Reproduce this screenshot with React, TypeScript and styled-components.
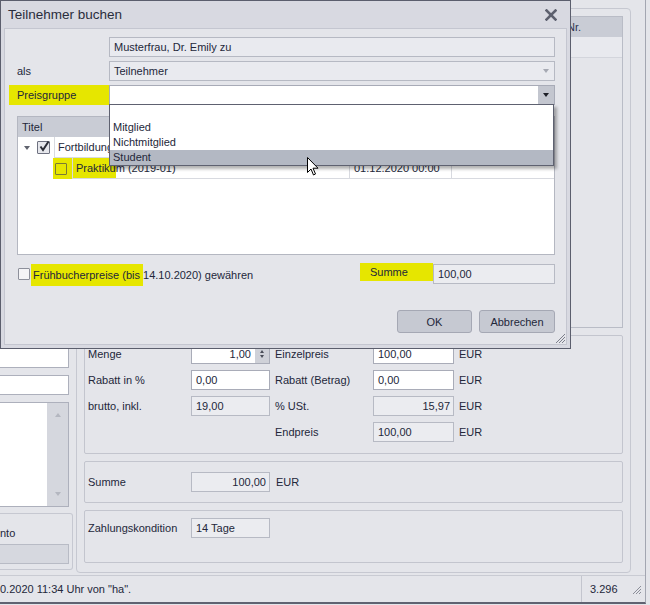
import React from 'react'
import styled, { createGlobalStyle } from 'styled-components'

const HIGHLIGHT = '#e6e600'
const TEXT = '#23273a'

const GlobalStyle = createGlobalStyle`
  html, body {
    margin: 0;
    padding: 0;
  }
  body {
    font-family: 'Liberation Sans', Arial, sans-serif;
    font-size: 11px;
    color: ${TEXT};
    background: #e4e5ea;
  }
  * {
    box-sizing: border-box;
  }
`

const Screen = styled.div`
  position: relative;
  width: 650px;
  height: 605px;
  overflow: hidden;
  background: #e4e5ea;
`

/* ---------- background application window ---------- */

const AppWindow = styled.div`
  display: flex;
  flex-direction: column;
  width: 646px;
  height: 604px;
  border-right: 1px solid #a3a6b1;
  border-bottom: 2px solid #5f6271;
`

const MainArea = styled.div`
  display: flex;
  height: 575px;
`

const LeftCol = styled.div`
  width: 73px;
  display: flex;
  flex-direction: column;
  justify-content: flex-end;
  padding-bottom: 5px;
`

const SideInput = styled.div`
  width: 69px;
  height: 20px;
  background: #fff;
  border: 1px solid #adb0bc;
  border-left: none;
  margin-bottom: 7px;
`

const Memo = styled.div`
  width: 69px;
  height: 105px;
  background: #fff;
  border: 1px solid #adb0bc;
  border-left: none;
  margin-bottom: 6px;
  display: flex;
  justify-content: flex-end;
`

const ScrollBar = styled.div`
  width: 21px;
  background: #d5d7de;
  display: flex;
  flex-direction: column;
  justify-content: space-between;
  align-items: center;
  padding: 10px 0 10px;
`

const Tri = styled.span<{ $dir: 'up' | 'down'; $color: string; $w?: number; $h?: number }>`
  width: 0;
  height: 0;
  border-left: ${p => (p.$w ?? 7) / 2}px solid transparent;
  border-right: ${p => (p.$w ?? 7) / 2}px solid transparent;
  ${p => (p.$dir === 'up' ? 'border-bottom' : 'border-top')}: ${p => p.$h ?? 4}px solid ${p => p.$color};
`

const SideGroup = styled.div`
  width: 73px;
  height: 57px;
  border: 1px solid #c6c8d1;
  border-left: none;
  border-radius: 0 3px 3px 0;
  padding-top: 12px;
  display: flex;
  flex-direction: column;
`

const SideLabel = styled.div`
  line-height: 14px;
  height: 14px;
`

const SideField = styled.div`
  margin-top: 4px;
  width: 69px;
  height: 20px;
  background: #d6d8df;
  border: 1px solid #b8bbc5;
  border-left: none;
`

const MainGroup = styled.div`
  margin: 8px 0 2px 3px;
  width: 555px;
  border: 1px solid #c6c8d1;
  border-radius: 4px;
  padding: 7px 7px 0 7px;
  display: flex;
  flex-direction: column;
  gap: 7px;
`

const RightStrip = styled.div`
  flex: 1;
`

const GridBox = styled.div`
  height: 312px;
  border: 1px solid #b9bcc6;
  display: flex;
  flex-direction: column;
`

const GridHeader = styled.div`
  height: 20px;
  background: #c9ccd5;
  display: flex;
  justify-content: flex-end;
`

const GridHeadCell = styled.div<{ $w: number }>`
  width: ${p => p.$w}px;
  border-left: 1px solid #b0b3be;
  padding-left: 4px;
  display: flex;
  align-items: center;
  color: #2d3350;
`

const GridRow = styled.div`
  height: 21px;
  background: #e8e9ee;
  border-bottom: 1px solid #d3d5dc;
`

const Section = styled.div<{ $h: number; $pt: number }>`
  height: ${p => p.$h}px;
  border: 1px solid #c3c5ce;
  border-radius: 2px;
  padding: ${p => p.$pt}px 0 0 3px;
`

const FieldGrid = styled.div`
  display: grid;
  grid-template-columns: 103px 79px 103px 81px auto;
  grid-auto-rows: 20px;
  row-gap: 6px;
  align-items: center;
`

const Label = styled.span<{ $pl?: number }>`
  padding-left: ${p => p.$pl ?? 0}px;
  white-space: nowrap;
`

const Box = styled.div<{ $tone?: 'white' | 'grey'; $align?: 'left' | 'right' }>`
  height: 20px;
  border: 1px solid ${p => (p.$tone === 'grey' ? '#b7bac4' : '#a9acb8')};
  background: ${p => (p.$tone === 'grey' ? '#ebecf0' : '#fff')};
  display: flex;
  align-items: center;
  justify-content: ${p => (p.$align === 'right' ? 'flex-end' : 'flex-start')};
  padding: 0 3px 0 4px;
  white-space: nowrap;
  overflow: hidden;
`

const SpinBox = styled(Box)`
  padding-right: 0;
`

const SpinValue = styled.span`
  flex: 1;
  text-align: right;
  padding-right: 4px;
`

const Spinner = styled.div`
  width: 14px;
  align-self: stretch;
  background: #cfd1d8;
  display: flex;
  flex-direction: column;
  align-items: center;
  justify-content: center;
  gap: 2px;
`

const StatusBar = styled.div`
  flex: 1;
  display: flex;
  border-top: 1px solid #c9cbd3;
`

const StatusText = styled.div`
  flex: 1;
  display: flex;
  align-items: center;
  white-space: nowrap;
`

const StatusCell = styled.div`
  width: 64px;
  border-left: 1px solid #c3c5ce;
  display: flex;
  align-items: center;
  justify-content: space-between;
  padding: 0 3px 0 8px;
`

/* ---------- dialog ---------- */

const Dialog = styled.div`
  position: absolute;
  left: 0;
  top: 0;
  width: 571px;
  height: 349px;
  border: 1px solid #5b5e6d;
  background: #d8d9e1;
  display: flex;
  flex-direction: column;
`

const TitleBar = styled.div`
  height: 27px;
  padding: 0 13px 0 7px;
  display: flex;
  align-items: center;
  justify-content: space-between;
`

const Title = styled.span`
  font-size: 13.5px;
  color: #2a2d3c;
`

const DialogBody = styled.div`
  position: relative;
  flex: 1;
  margin: 0 3px 3px 3px;
  border: 1px solid #c4c6d0;
  background: #e4e5ea;
  padding: 8px 11px 0 4px;
  display: flex;
  flex-direction: column;
`

const FormRow = styled.div`
  display: grid;
  grid-template-columns: 100px 1fr;
  height: 20px;
  margin-bottom: 4px;
`

const FormLabel = styled.div<{ $hl?: boolean }>`
  display: flex;
  align-items: center;
  padding-left: 8px;
  background: ${p => (p.$hl ? HIGHLIGHT : 'transparent')};
`

const Field = styled.div<{ $editable?: boolean }>`
  position: relative;
  display: flex;
  align-items: center;
  border: 1px solid ${p => (p.$editable ? '#a8abb7' : '#b6b9c3')};
  background: ${p => (p.$editable ? '#fff' : '#e9eaef')};
  padding-left: 4px;
`

const FieldText = styled.span`
  flex: 1;
`

const GhostArrow = styled.div`
  width: 16px;
  display: flex;
  justify-content: center;
`

const ArrowButton = styled.div`
  width: 16px;
  align-self: stretch;
  background: #c3c6cf;
  display: flex;
  align-items: center;
  justify-content: center;
`

const Popup = styled.div`
  position: absolute;
  top: 18px;
  left: -1px;
  right: 0;
  height: 62px;
  border: 1px solid #5e6170;
  background: #fff;
  box-shadow: 3px 3px 3px rgba(0, 0, 0, 0.3);
  z-index: 5;
`

const PopupItem = styled.div<{ $selected?: boolean }>`
  height: 15px;
  line-height: 15px;
  padding-left: 3px;
  background: ${p => (p.$selected ? '#b3b8c3' : 'transparent')};
`

const Tree = styled.div`
  margin: 7px 0 0 8px;
  height: 139px;
  border: 1px solid #b4b7c1;
  background: #fff;
`

const TreeHeader = styled.div`
  height: 20px;
  background: #c9ccd5;
  display: flex;
  align-items: center;
  padding-left: 4px;
`

const TreeRow = styled.div`
  display: flex;
  height: 21px;
`

const Expander = styled.div`
  width: 17px;
  display: flex;
  align-items: center;
  justify-content: center;
`

const Indent = styled.div<{ $w: number }>`
  width: ${p => p.$w}px;
`

const CheckZone = styled.div<{ $hl?: boolean }>`
  width: 19px;
  display: flex;
  align-items: center;
  padding-left: 2px;
  background: ${p => (p.$hl ? HIGHLIGHT : 'transparent')};
`

const Check = styled.span<{ $size: number; $border: string; $fill: string }>`
  position: relative;
  width: ${p => p.$size}px;
  height: ${p => p.$size}px;
  border: 1px solid ${p => p.$border};
  background: ${p => p.$fill};
  border-radius: 1px;
  flex-shrink: 0;
  svg {
    position: absolute;
    left: 0;
    top: -2px;
  }
`

const TitleCell = styled.div<{ $w: number; $hl?: number }>`
  width: ${p => p.$w}px;
  border-left: 1px solid #d8dae0;
  border-bottom: 1px solid #d8dae0;
  padding-left: 3px;
  display: flex;
  align-items: center;
  white-space: nowrap;
  overflow: hidden;
  background: ${p =>
    p.$hl ? `linear-gradient(to right, ${HIGHLIGHT} 0 ${p.$hl}px, #fff ${p.$hl}px)` : '#fff'};
`

const DataCell = styled.div<{ $w?: number }>`
  ${p => (p.$w ? `width: ${p.$w}px;` : 'flex: 1;')}
  border-left: 1px solid #d8dae0;
  border-bottom: 1px solid #d8dae0;
  padding-left: 4px;
  display: flex;
  align-items: center;
  white-space: nowrap;
`

const BottomRow = styled.div`
  margin-top: 9px;
  height: 22px;
  display: flex;
  align-items: flex-start;
  padding-left: 9px;
`

const CheckLabel = styled.div`
  margin-left: 1px;
  height: 22px;
  padding-left: 2px;
  display: flex;
  align-items: center;
  white-space: nowrap;
  background: linear-gradient(to right, ${HIGHLIGHT} 0 112px, transparent 112px);
`

const SumLabel = styled.div`
  margin-left: auto;
  margin-top: -1px;
  width: 73px;
  height: 18px;
  padding-left: 10px;
  display: flex;
  align-items: center;
  background: ${HIGHLIGHT};
`

const SumBox = styled(Box)`
  width: 122px;
`

const ButtonRow = styled.div`
  margin-top: 24px;
  display: flex;
  justify-content: flex-end;
  gap: 7px;
`

const Button = styled.div<{ $w: number }>`
  width: ${p => p.$w}px;
  height: 23px;
  background: #c6c9d2;
  border: 1px solid #a5a8b4;
  border-radius: 3px;
  display: flex;
  align-items: center;
  justify-content: center;
`

const Grip = styled.svg`
  position: absolute;
  right: 0;
  bottom: 0;
`

const Cursor = styled.svg`
  position: absolute;
  left: 307px;
  top: 157px;
  z-index: 10;
`

const GripIcon = () => (
  <svg width="11" height="11" viewBox="0 0 11 11">
    <g stroke="#8b8e99" strokeWidth="1">
      <line x1="10" y1="2" x2="2" y2="10" />
      <line x1="10" y1="5" x2="5" y2="10" />
      <line x1="10" y1="8" x2="8" y2="10" />
    </g>
  </svg>
)

const CheckMark = () => (
  <svg width="13" height="13" viewBox="0 0 13 13">
    <path d="M2.5 6.5 L5 10 L10.5 1.5" fill="none" stroke="#2b2d36" strokeWidth="2" />
  </svg>
)

export default function App() {
  return (
    <>
      <GlobalStyle />
      <Screen>
        <AppWindow>
          <MainArea>
            <LeftCol>
              <SideInput />
              <SideInput />
              <Memo>
                <ScrollBar>
                  <Tri $dir="up" $color="#b4b7c0" />
                  <Tri $dir="down" $color="#b4b7c0" />
                </ScrollBar>
              </Memo>
              <SideGroup>
                <SideLabel>nto</SideLabel>
                <SideField />
              </SideGroup>
            </LeftCol>

            <MainGroup>
              <GridBox>
                <GridHeader>
                  <GridHeadCell $w={60}>Nr.</GridHeadCell>
                </GridHeader>
                <GridRow />
              </GridBox>

              <Section $h={119} $pt={8}>
                <FieldGrid>
                  <Label>Menge</Label>
                  <SpinBox>
                    <SpinValue>1,00</SpinValue>
                    <Spinner>
                      <Tri $dir="up" $color="#4a4d58" $w={5} $h={3} />
                      <Tri $dir="down" $color="#4a4d58" $w={5} $h={3} />
                    </Spinner>
                  </SpinBox>
                  <Label $pl={5}>Einzelpreis</Label>
                  <Box>100,00</Box>
                  <Label $pl={5}>EUR</Label>

                  <Label>Rabatt in %</Label>
                  <Box>0,00</Box>
                  <Label $pl={5}>Rabatt (Betrag)</Label>
                  <Box>0,00</Box>
                  <Label $pl={5}>EUR</Label>

                  <Label>brutto, inkl.</Label>
                  <Box $tone="grey">19,00</Box>
                  <Label $pl={5}>% USt.</Label>
                  <Box $tone="grey" $align="right">15,97</Box>
                  <Label $pl={5}>EUR</Label>

                  <span />
                  <span />
                  <Label $pl={5}>Endpreis</Label>
                  <Box $tone="grey">100,00</Box>
                  <Label $pl={5}>EUR</Label>
                </FieldGrid>
              </Section>

              <Section $h={42} $pt={10}>
                <FieldGrid>
                  <Label>Summe</Label>
                  <Box $tone="grey" $align="right">100,00</Box>
                  <Label $pl={6}>EUR</Label>
                </FieldGrid>
              </Section>

              <Section $h={53} $pt={7}>
                <FieldGrid>
                  <Label>Zahlungskondition</Label>
                  <Box $tone="grey">14 Tage</Box>
                </FieldGrid>
              </Section>
            </MainGroup>
            <RightStrip />
          </MainArea>

          <StatusBar>
            <StatusText>0.2020 11:34 Uhr von "ha".</StatusText>
            <StatusCell>
              <span>3.296</span>
              <GripIcon />
            </StatusCell>
          </StatusBar>
        </AppWindow>

        <Dialog>
          <TitleBar>
            <Title>Teilnehmer buchen</Title>
            <svg width="12" height="12" viewBox="0 0 12 12">
              <g stroke="#5d606e" strokeWidth="2.6" strokeLinecap="square">
                <line x1="1.5" y1="1.5" x2="10.5" y2="10.5" />
                <line x1="10.5" y1="1.5" x2="1.5" y2="10.5" />
              </g>
            </svg>
          </TitleBar>

          <DialogBody>
            <FormRow>
              <FormLabel />
              <Field>
                <FieldText>Musterfrau, Dr. Emily zu</FieldText>
              </Field>
            </FormRow>
            <FormRow>
              <FormLabel>als</FormLabel>
              <Field>
                <FieldText>Teilnehmer</FieldText>
                <GhostArrow>
                  <Tri $dir="down" $color="#a6a9b3" />
                </GhostArrow>
              </Field>
            </FormRow>
            <FormRow>
              <FormLabel $hl>Preisgruppe</FormLabel>
              <Field $editable>
                <FieldText />
                <ArrowButton>
                  <Tri $dir="down" $color="#1d1f27" />
                </ArrowButton>
                <Popup>
                  <PopupItem />
                  <PopupItem>Mitglied</PopupItem>
                  <PopupItem>Nichtmitglied</PopupItem>
                  <PopupItem $selected>Student</PopupItem>
                </Popup>
              </Field>
            </FormRow>

            <Tree>
              <TreeHeader>Titel</TreeHeader>
              <TreeRow>
                <Expander>
                  <Tri $dir="down" $color="#60636e" />
                </Expander>
                <CheckZone>
                  <Check $size={13} $border="#6e7180" $fill="#e6e7ec">
                    <CheckMark />
                  </Check>
                </CheckZone>
                <TitleCell $w={295}>Fortbildung</TitleCell>
                <DataCell $w={102} />
                <DataCell />
              </TreeRow>
              <TreeRow>
                <Indent $w={35} />
                <CheckZone $hl>
                  <Check $size={12} $border="#7a7a34" $fill="transparent" />
                </CheckZone>
                <TitleCell $w={277} $hl={43}>
                  Praktikum (2019-01)
                </TitleCell>
                <DataCell $w={102}>01.12.2020 00:00</DataCell>
                <DataCell />
              </TreeRow>
            </Tree>

            <BottomRow>
              <Check $size={12} $border="#8d909b" $fill="#f4f4f6" style={{ marginTop: 4 }} />
              <CheckLabel>Frühbucherpreise (bis 14.10.2020) gewähren</CheckLabel>
              <SumLabel>Summe</SumLabel>
              <SumBox $tone="grey">100,00</SumBox>
            </BottomRow>

            <ButtonRow>
              <Button $w={75}>OK</Button>
              <Button $w={76}>Abbrechen</Button>
            </ButtonRow>

            <Grip width="11" height="11" viewBox="0 0 11 11">
              <g stroke="#7d808c" strokeWidth="1">
                <line x1="10" y1="1" x2="1" y2="10" />
                <line x1="10" y1="4" x2="4" y2="10" />
                <line x1="10" y1="7" x2="7" y2="10" />
              </g>
            </Grip>
          </DialogBody>
        </Dialog>

        <Cursor width="13" height="20" viewBox="0 0 13 20">
          <path
            d="M0.5 0.5 L0.5 15.5 L4 12 L6.5 18 L8.5 17 L6 11.2 L11 11.2 Z"
            fill="#fff"
            stroke="#000"
            strokeWidth="1"
            strokeLinejoin="miter"
          />
        </Cursor>
      </Screen>
    </>
  )
}
